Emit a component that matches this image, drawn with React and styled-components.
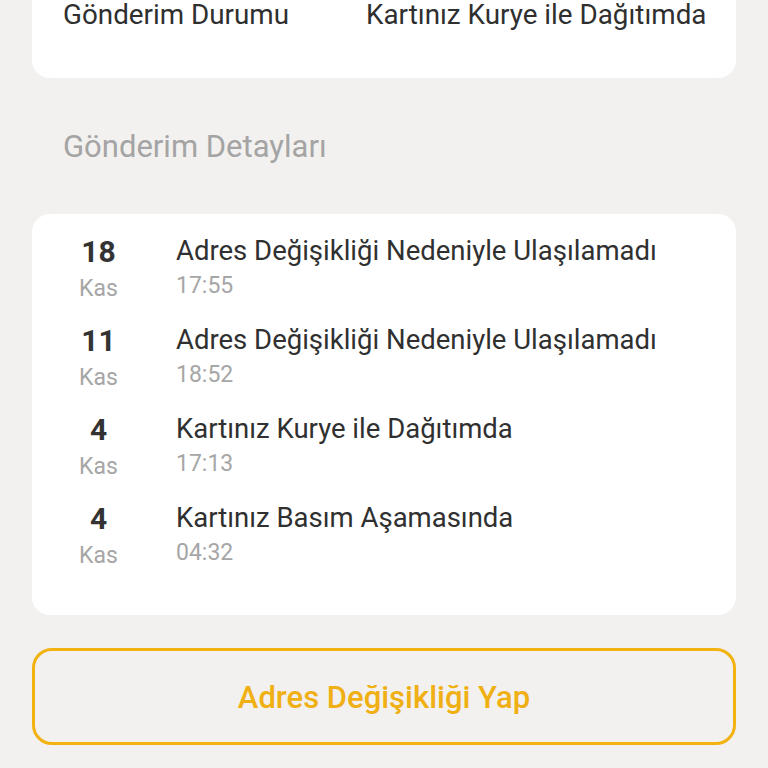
import React from "react";
import styled, { createGlobalStyle } from "styled-components";

const Global = createGlobalStyle`
  html, body { margin: 0; padding: 0; background: #f2f1ef; }
  body { font-family: Roboto, "Noto Sans", sans-serif; }
  * { box-sizing: border-box; }
`;

const Page = styled.div`
  width: 768px;
  height: 768px;
  overflow: hidden;
  padding: 0 32px;
  display: flex;
  flex-direction: column;
`;

const InfoCard = styled.div`
  background: #fff;
  border-radius: 0 0 18px 18px;
  padding: 1px 31px 0;
  height: 78px;
`;

const InfoRow = styled.div`
  display: grid;
  grid-template-columns: 303px 1fr;
  font-size: 27.8px;
  line-height: 28px;
  color: #2f2f2f;
  white-space: nowrap;
`;

const SectionTitle = styled.h2`
  margin: 0;
  padding: 53px 31px 0;
  height: 136px;
  font-size: 31px;
  font-weight: 400;
  line-height: 32px;
  color: #a4a4a4;
`;

const TimelineCard = styled.div`
  background: #fff;
  border-radius: 18px;
  padding: 19px 0 0;
  height: 401px;
  display: flex;
  flex-direction: column;
`;

const Event = styled.div`
  display: grid;
  grid-template-columns: 133px 1fr;
  column-gap: 11px;
  height: 89px;
`;

const DateCol = styled.div`
  display: flex;
  flex-direction: column;
  align-items: center;
  padding-top: 3px;
`;

const Day = styled.div`
  font-size: 30px;
  font-weight: 700;
  color: #333;
  line-height: 32px;
`;

const Month = styled.div`
  font-size: 23px;
  color: #a6a6a6;
  line-height: 32px;
  margin-top: 5px;
`;

const TextCol = styled.div`
  display: flex;
  flex-direction: column;
  white-space: nowrap;
  padding-top: 2px;
`;

const Title = styled.div`
  font-size: 27.5px;
  color: #303030;
  line-height: 32px;
`;

const Time = styled.div`
  font-size: 23px;
  color: #a6a6a6;
  line-height: 32px;
  margin-top: 3px;
`;

const ActionButton = styled.button`
  margin-top: 33px;
  height: 97px;
  width: 100%;
  background: transparent;
  border: 3.5px solid #f2b20f;
  border-radius: 20px;
  display: flex;
  align-items: center;
  justify-content: center;
  padding: 2px 0 0;
  cursor: pointer;
  font-family: Roboto, sans-serif;
  font-size: 31px;
  font-weight: 500;
  color: #f0b014;
`;

const events = [
  { day: "18", title: "Adres Değişikliği Nedeniyle Ulaşılamadı", time: "17:55" },
  { day: "11", title: "Adres Değişikliği Nedeniyle Ulaşılamadı", time: "18:52" },
  { day: "4", title: "Kartınız Kurye ile Dağıtımda", time: "17:13" },
  { day: "4", title: "Kartınız Basım Aşamasında", time: "04:32" },
];

export default function App() {
  return (
    <>
      <Global />
      <Page>
        <InfoCard>
          <InfoRow>
            <span>Gönderim Durumu</span>
            <span>Kartınız Kurye ile Dağıtımda</span>
          </InfoRow>
        </InfoCard>
        <SectionTitle>Gönderim Detayları</SectionTitle>
        <TimelineCard>
          {events.map((e, i) => (
            <Event key={i}>
              <DateCol>
                <Day>{e.day}</Day>
                <Month>Kas</Month>
              </DateCol>
              <TextCol>
                <Title>{e.title}</Title>
                <Time>{e.time}</Time>
              </TextCol>
            </Event>
          ))}
        </TimelineCard>
        <ActionButton>Adres Değişikliği Yap</ActionButton>
      </Page>
    </>
  );
}
